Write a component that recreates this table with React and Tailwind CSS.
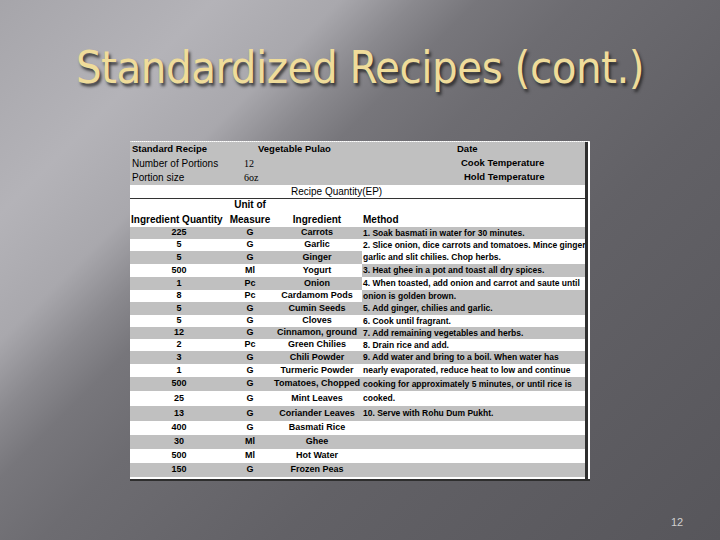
import React from 'react';

const rows = [
  { q: '225', u: 'G', name: 'Carrots', h: 12 },
  { q: '5', u: 'G', name: 'Garlic', h: 12 },
  { q: '5', u: 'G', name: 'Ginger', h: 13 },
  { q: '500', u: 'Ml', name: 'Yogurt', h: 13 },
  { q: '1', u: 'Pc', name: 'Onion', h: 13 },
  { q: '8', u: 'Pc', name: 'Cardamom Pods', h: 12 },
  { q: '5', u: 'G', name: 'Cumin Seeds', h: 13 },
  { q: '5', u: 'G', name: 'Cloves', h: 12 },
  { q: '12', u: 'G', name: 'Cinnamon, ground', h: 12 },
  { q: '2', u: 'Pc', name: 'Green Chilies', h: 12 },
  { q: '3', u: 'G', name: 'Chili Powder', h: 13 },
  { q: '1', u: 'G', name: 'Turmeric Powder', h: 13 },
  { q: '500', u: 'G', name: 'Tomatoes, Chopped', h: 14 },
  { q: '25', u: 'G', name: 'Mint Leaves', h: 15 },
  { q: '13', u: 'G', name: 'Coriander Leaves', h: 15 },
  { q: '400', u: 'G', name: 'Basmati Rice', h: 14 },
  { q: '30', u: 'Ml', name: 'Ghee', h: 14 },
  { q: '500', u: 'Ml', name: 'Hot Water', h: 14 },
  { q: '150', u: 'G', name: 'Frozen Peas', h: 14 },
];

const method = [
  '1. Soak basmati in water for 30 minutes.',
  '2. Slice onion, dice carrots and tomatoes. Mince ginger',
  'garlic and slit chilies. Chop herbs.',
  '3. Heat ghee in a pot and toast all dry spices.',
  '4. When toasted, add onion and carrot and saute until',
  'onion is golden brown.',
  '5. Add ginger, chilies and garlic.',
  '6. Cook until fragrant.',
  '7. Add remaining vegetables and herbs.',
  '8. Drain rice and add.',
  '9. Add water and bring to a boil. When water has',
  'nearly evaporated, reduce heat to low and continue',
  'cooking for approximately 5 minutes, or until rice is',
  'cooked.',
  '10. Serve with Rohu Dum Pukht.',
  '', '', '', '',
];

// method column has its own banding for the first rows
const methodGray = [1, 0, 0, 1, 0, 1, 1, 0, 1, 0, 1, 0, 1, 0, 1, 0, 1, 0, 1];

export default function App() {
  return (
    <div className="w-[720px] h-[540px] relative overflow-hidden flex flex-col bg-[linear-gradient(135deg,#a6a5aa_0%,#b4b3b8_17%,#a9a8ad_27%,#8a898e_33%,#77767b_38%,#6d6c71_46%,#626166_65%,#57565b_100%)]">
      {/* Title */}
      <h1 className="mt-[37px] h-[62px] text-center text-[#efdc9a] text-[45px] leading-[62px] font-['DejaVu_Sans_Condensed','DejaVu_Sans',sans-serif] [text-shadow:2px_3px_3px_rgba(30,30,30,0.8)] tracking-[-0.5px]">
        Standardized Recipes (cont.)
      </h1>

      {/* Recipe sheet picture */}
      <div className="mt-[42px] ml-[130px] w-[460px] h-[340px] flex flex-col bg-white border-t border-dotted border-[#e6e6e6] font-['Liberation_Sans',Arial,sans-serif] text-black">
        <div className="flex flex-1">
          <div className="w-[455px] flex flex-col">
            {/* header band */}
            <div className="h-[43px] bg-[#c0c0c0] flex flex-col">
              <div className="h-[14px] flex items-center text-[9.5px] font-bold">
                <span className="w-[128px] pl-[2px]">Standard Recipe</span>
                <span className="w-[199px]">Vegetable Pulao</span>
                <span>Date</span>
              </div>
              <div className="h-[14px] flex items-center">
                <span className="w-[114px] pl-[2px] text-[10px]">Number of Portions</span>
                <span className="w-[217px] text-[10px] font-['Liberation_Serif',serif]">12</span>
                <span className="text-[9.5px] font-bold">Cook Temperature</span>
              </div>
              <div className="h-[14px] flex items-center">
                <span className="w-[114px] pl-[2px] text-[10px]">Portion size</span>
                <span className="w-[220px] text-[10px] font-['Liberation_Serif',serif]">6oz</span>
                <span className="text-[9.5px] font-bold">Hold Temperature</span>
              </div>
            </div>

            <div className="h-[14px] flex items-center text-[10px] pl-[161px] border-b border-[#333]">
              Recipe Quantity(EP)
            </div>

            <div className="h-[13px] flex items-end text-[10px] font-bold">
              <span className="w-[98px]"></span>
              <span className="w-[44px] text-center">Unit of</span>
            </div>
            <div className="h-[15px] flex items-center text-[10px] font-bold">
              <span className="w-[98px] pl-[1px] whitespace-nowrap">Ingredient Quantity</span>
              <span className="w-[44px] text-center">Measure</span>
              <span className="w-[90px] text-center">Ingredient</span>
              <span className="pl-[1px]">Method</span>
            </div>

            {rows.map((r, i) => (
              <div key={i} className="flex" style={{ height: r.h }}>
                <div className={`w-[232px] flex items-center text-[9px] font-bold ${i % 2 === 0 ? 'bg-[#c0c0c0]' : 'bg-white'}`}>
                  <span className="w-[98px] text-center">{r.q}</span>
                  <span className="w-[44px] text-center">{r.u}</span>
                  <span className="w-[90px] text-center whitespace-nowrap overflow-hidden">{r.name}</span>
                </div>
                <div className={`flex-1 flex items-center pl-[1px] text-[8.5px] font-bold whitespace-nowrap overflow-hidden ${methodGray[i] ? 'bg-[#c0c0c0]' : 'bg-white'}`}>
                  {method[i]}
                </div>
              </div>
            ))}
          </div>
          <div className="w-[3px] bg-[#2e2e2e]"></div>
          <div className="w-[2px] bg-white"></div>
        </div>
        <div className="h-[2px] bg-[#2e2e2e]"></div>
      </div>

      {/* slide number */}
      <div className="absolute left-[671px] top-[514px] text-[11px] text-[#cfcfcf] font-['Liberation_Sans',Arial,sans-serif]">
        12
      </div>
    </div>
  );
}
